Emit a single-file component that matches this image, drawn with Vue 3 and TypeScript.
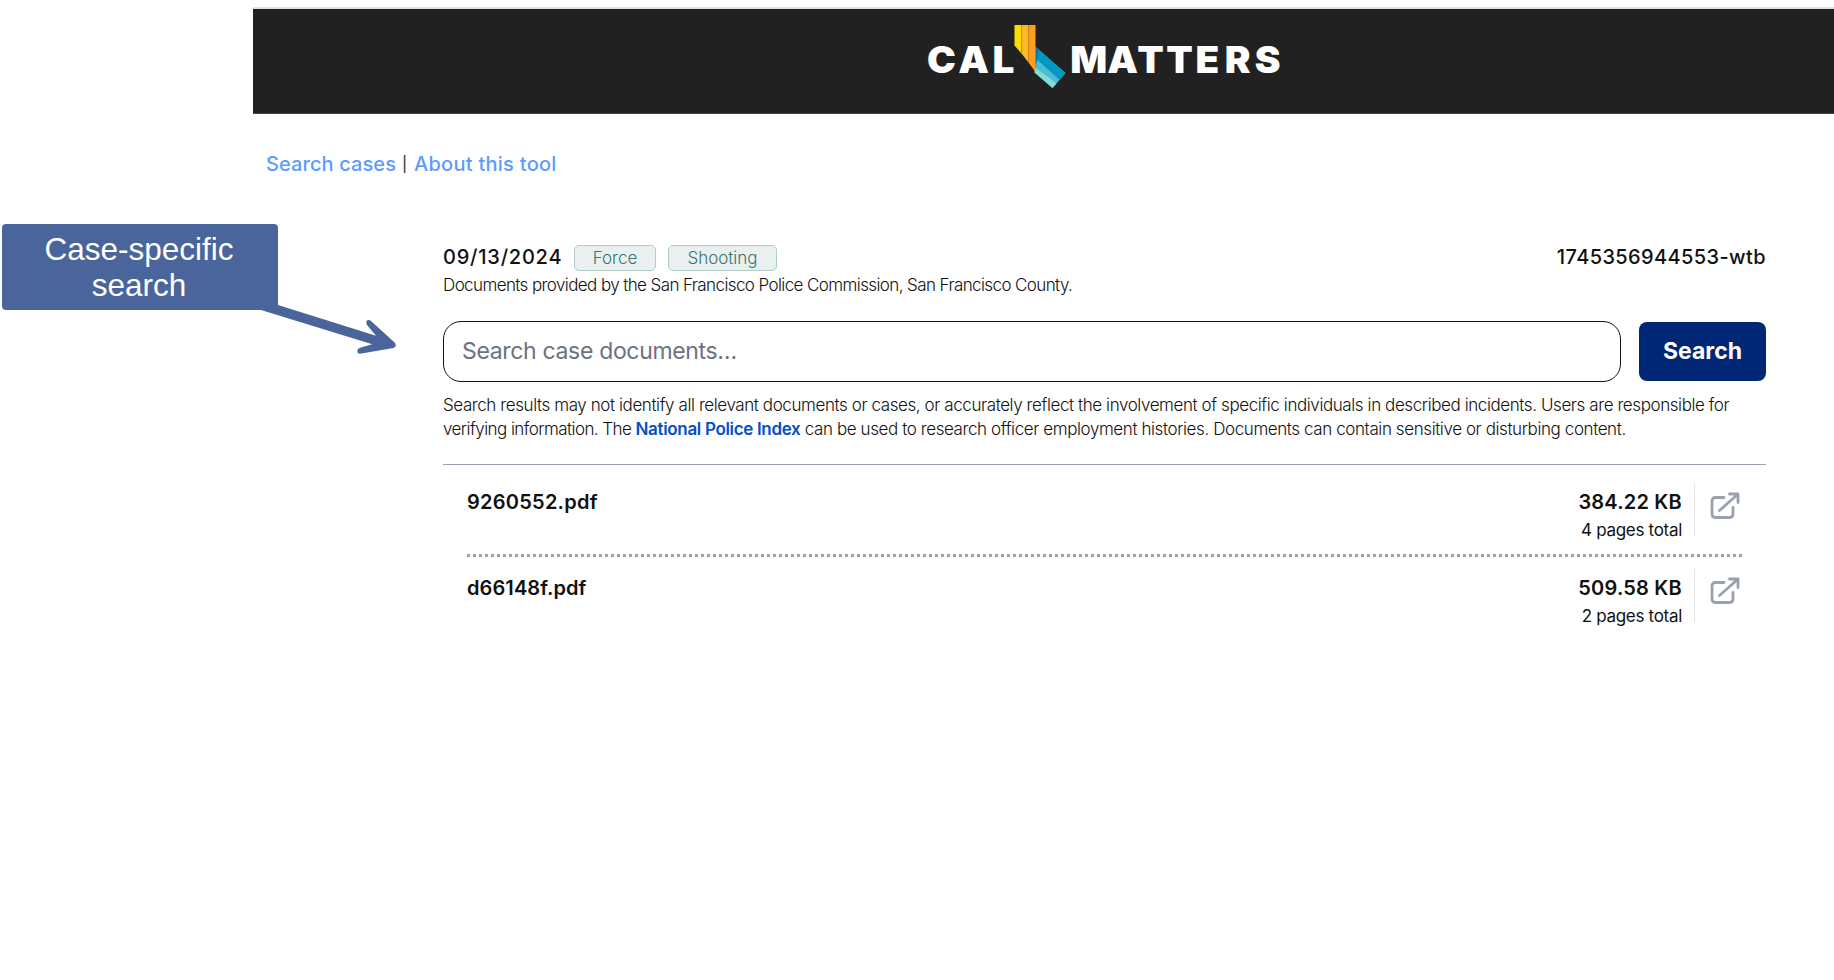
<script setup lang="ts">
interface CaseFile {
  name: string
  size: string
  pages: string
}

const tags: string[] = ['Force', 'Shooting']

const files: CaseFile[] = [
  { name: '9260552.pdf', size: '384.22 KB', pages: '4 pages total' },
  { name: 'd66148f.pdf', size: '509.58 KB', pages: '2 pages total' },
]
</script>

<template>
  <div class="page">
    <div class="site">
      <header class="masthead">
        <svg class="logo" viewBox="0 0 360 68" width="360" height="68" role="img" aria-label="CalMatters">
          <g transform="scale(1.06,1)">
            <text class="wordmark" y="47.8" x="0 29.4 61.8">CAL</text>
            <text class="wordmark" y="47.8" x="135.2 170 198.4 225.8 253.4 281 309.2">MATTERS</text>
          </g>
          <g transform="translate(87.5,0)">
            <path d="M20 21 L51 48 L38 63 L20 47.5Z" fill="#4dbcd2" />
            <path d="M20 21 L51 48 L44.7 54.5 L23 35Z" fill="#0099c4" />
            <path d="M21.3 43 L42 58.5 L38 63 L20 47.5Z" fill="#7fded6" />
            <path d="M20 21.5 L24.5 25.5 L22.5 36 L20 45Z" fill="#0879a8" />
            <path d="M0 0H7V28.6L0 20.5Z" fill="#ffdc00" />
            <path d="M7 0H14V37.4L7 28.6Z" fill="#fdb92a" />
            <path d="M14 0H21V47L14 37.4Z" fill="#ff9e1b" />
            <path d="M7.2 0V29M14.2 0V37" stroke="#c88b1c" stroke-width=".7" />
          </g>
        </svg>
      </header>

      <nav class="nav">
        <a class="nav-search">Search cases</a><span class="bar">|</span><a class="nav-about">About this tool</a>
      </nav>

      <main class="case">
        <div class="case-head">
          <span class="date">09/13/2024</span>
          <span v-for="tag in tags" :key="tag" class="tag" :class="tag.toLowerCase()">{{ tag }}</span>
          <span class="case-id">1745356944553-wtb</span>
        </div>
        <p class="provider">Documents provided by the San Francisco Police Commission, San Francisco County.</p>

        <form class="search" @submit.prevent>
          <input class="field" type="text" placeholder="Search case documents…" />
          <button class="submit" type="submit"><span>Search</span></button>
        </form>

        <p class="notice">
          <span class="line">Search results may not identify all relevant documents or cases, or accurately reflect the involvement of specific individuals in described incidents. Users are responsible for</span>
          <span class="line second"><span class="lead">verifying information. The </span><a>National Police Index</a> can be used to research officer employment histories. Documents can contain sensitive or disturbing content.</span>
        </p>

        <ul class="files">
          <li v-for="file in files" :key="file.name" class="file">
            <span class="name">{{ file.name }}</span>
            <div class="meta">
              <span class="size">{{ file.size }}</span>
              <span class="pages">{{ file.pages }}</span>
            </div>
            <a class="open" aria-label="Open document">
              <svg viewBox="0 0 30 28" width="30" height="28" fill="none" stroke="currentColor" stroke-width="2.8" stroke-linecap="round" stroke-linejoin="round">
                <path d="M14 5.5H5.5Q2 5.5 2 9V22Q2 25.5 5.5 25.5H19.5Q23 25.5 23 22V15.5" />
                <path d="M9.5 18.5L27.5 2.5M19.5 2H28V10.5" />
              </svg>
            </a>
          </li>
        </ul>
      </main>
    </div>

    <div class="callout">Case-specific<br />search</div>
    <svg class="arrow" viewBox="0 0 150 70" width="150" height="70" aria-hidden="true">
      <path d="M11 9L28 4L126 34.7L117 24Q115.5 21 117 19.6Q119 18.4 121 20L144.6 41.5Q147.5 45 143.5 47L110 52.8Q107.3 52.6 107.3 50Q107.5 47.8 110 46.8L122.3 43.3Z" fill="#4a659b" />
    </svg>
  </div>
</template>

<style>
body {
  margin: 0;
  background: #fff;
}
</style>

<style scoped>
.page {
  position: relative;
  width: 1834px;
  height: 980px;
  overflow: hidden;
  font-family: Inter, 'Liberation Sans', sans-serif;
  color: #111;
}
.site {
  margin-left: 253px;
  padding-top: 7px;
}
.masthead {
  box-sizing: border-box;
  height: 107px;
  padding: 16px 0 0 674px;
  border-top: 2px solid #e2e2e2;
  border-bottom: 1px solid #454345;
  background: #212121;
}
.logo {
  display: block;
  overflow: visible;
}
.wordmark {
  font-family: Inter, sans-serif;
  font-size: 36.5px;
  font-weight: 900;
  fill: #fff;
}
.nav {
  display: flex;
  height: 24px;
  margin: 38px 0 0 13px;
  font-size: 20px;
  font-weight: 500;
  line-height: 24px;
  white-space: nowrap;
}
.nav a {
  color: #5c9cff;
}
.nav-search {
  width: 136px;
  letter-spacing: 0.1px;
}
.bar {
  width: 12px;
  color: #444;
  font-size: 15px;
  font-weight: 500;
  line-height: 23px;
}
.nav-about {
  letter-spacing: 0.27px;
}
.case {
  width: 1323px;
  margin: 69px 0 0 190px;
}
.case-head {
  display: flex;
  height: 26px;
  font-size: 20px;
  font-weight: 500;
  line-height: 24px;
  white-space: nowrap;
}
.date {
  width: 131px;
  letter-spacing: 0.78px;
}
.tag {
  box-sizing: border-box;
  height: 26px;
  margin-right: 12px;
  border: 1px solid #b0ccc9;
  border-radius: 5px;
  background: #eaf0f0;
  color: #39766f;
  font-size: 17px;
  font-weight: 300;
  line-height: 25px;
  text-align: center;
}
.force {
  width: 82px;
}
.shooting {
  width: 109px;
}
.case-id {
  margin-left: auto;
  letter-spacing: 0.38px;
}
.provider {
  height: 24px;
  margin: 2px 0 0;
  font-size: 17px;
  font-weight: 300;
  letter-spacing: -0.6px;
  line-height: 24px;
  white-space: nowrap;
}
.search {
  display: flex;
  align-items: center;
  gap: 18px;
  margin-top: 24px;
}
.field {
  box-sizing: border-box;
  width: 1178px;
  height: 61px;
  padding: 0 18px 2px;
  border: 1px solid #111;
  border-radius: 18px;
  background: #fff;
  font-family: inherit;
  font-size: 23px;
  letter-spacing: -0.33px;
}
.field::placeholder {
  color: #6b7280;
  opacity: 1;
}
.submit {
  width: 127px;
  height: 59px;
  padding: 0 0 2px;
  border: 0;
  border-radius: 8px;
  background: #002676;
  color: #fff;
  font-family: inherit;
  font-size: 23px;
  font-weight: 700;
}
.notice {
  margin: 11px 0 0;
  font-size: 17px;
  font-weight: 300;
  letter-spacing: -0.412px;
  line-height: 24px;
  white-space: nowrap;
}
.line {
  display: block;
  width: max-content;
}
.second {
  letter-spacing: -0.407px;
}
.lead {
  letter-spacing: -0.56px;
}
.notice a {
  color: #0050c8;
  font-weight: 600;
  letter-spacing: -0.33px;
}
.files {
  margin: 23px 0 0;
  padding: 0 24px;
  border-top: 1px solid #98a1b2;
  list-style: none;
}
.file {
  display: flex;
  height: 54px;
  padding: 18px 0 17px;
}
.file + .file {
  padding-top: 15px;
  background: repeating-linear-gradient(90deg, #98a1b2 0 3px, transparent 3px 6px) 0 0 / 100% 3px no-repeat;
}
.name {
  font-size: 20px;
  font-weight: 600;
  letter-spacing: 0.25px;
  line-height: 39px;
}
.file + .file .name {
  letter-spacing: 0.1px;
}
.meta {
  display: flex;
  flex-direction: column;
  align-items: flex-end;
  box-sizing: border-box;
  height: 53px;
  margin-left: auto;
  padding-right: 12px;
  border-right: 1px solid #e0e3e6;
  white-space: nowrap;
}
.size {
  font-size: 20px;
  font-weight: 600;
  letter-spacing: 0.2px;
  line-height: 39px;
}
.pages {
  margin-top: -2px;
  font-size: 17px;
  font-weight: 400;
  letter-spacing: -0.3px;
  line-height: 20px;
}
.open {
  padding: 9px 2px 0 15px;
  color: #98a1b2;
}
.file + .file .open {
  padding-top: 8px;
}
.callout {
  position: absolute;
  top: 224px;
  left: 2px;
  box-sizing: border-box;
  width: 276px;
  height: 86px;
  padding-top: 7px;
  padding-right: 2px;
  border-radius: 4px;
  background: #4a659b;
  color: #fff;
  font-family: 'Liberation Sans', Arial, sans-serif;
  font-size: 31.5px;
  line-height: 36px;
  text-align: center;
}
.arrow {
  position: absolute;
  top: 301px;
  left: 250px;
}
</style>
